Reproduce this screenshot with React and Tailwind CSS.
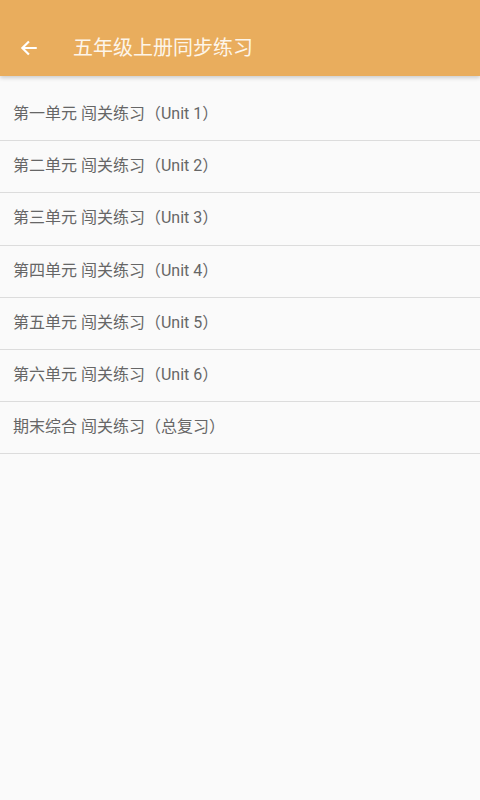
import React from 'react';

const units = [
  '第一单元 闯关练习（Unit 1）',
  '第二单元 闯关练习（Unit 2）',
  '第三单元 闯关练习（Unit 3）',
  '第四单元 闯关练习（Unit 4）',
  '第五单元 闯关练习（Unit 5）',
  '第六单元 闯关练习（Unit 6）',
  '期末综合 闯关练习（总复习）',
];

const App = () => {
  return (
    <div
      className="w-[480px] h-[800px] bg-[#fafafa] flex flex-col overflow-hidden"
      style={{ fontFamily: 'Roboto, "Noto Sans CJK SC", sans-serif' }}
    >
      {/* Toolbar */}
      <header className="h-[76px] bg-[#e9ad5d] flex items-end pb-[14px] shadow-[0_2px_4px_rgba(0,0,0,0.18)] relative z-10">
        <button className="w-[58px] h-[28px] flex items-center justify-center text-white">
          <svg className="w-[20px] h-[20px]" viewBox="0 0 24 24" fill="none" stroke="currentColor" strokeWidth="2.6" strokeLinecap="square">
            <path d="M20 12H5M11 5l-7 7 7 7" />
          </svg>
        </button>
        <h1 className="ml-[15px] text-[20px] leading-[28px] text-[#fdf5e9]">五年级上册同步练习</h1>
      </header>

      {/* Unit list */}
      <ul className="pt-[13px]">
        {units.map((u) => (
          <li
            key={u}
            className="h-[52.2px] flex items-center pl-[13px] pb-[1px] border-b border-[#dcdcdc] text-[16px] text-[#666666]"
          >
            {u}
          </li>
        ))}
      </ul>
    </div>
  );
};

export default App;
